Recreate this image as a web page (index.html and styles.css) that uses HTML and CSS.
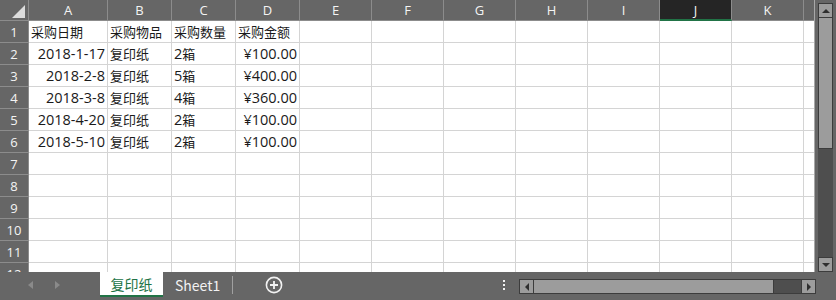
FILE: index.html
```html
<!DOCTYPE html>
<html>
<head>
<meta charset="utf-8">
<title>采购记录</title>
<link rel="stylesheet" href="styles.css">
</head>
<body>
<div class="book">
  <div class="sheet-area">
    <div class="grid">
      <!-- column headers -->
      <div class="corner"><span class="corner-mark"></span></div>
      <div class="col-head">A</div>
      <div class="col-head">B</div>
      <div class="col-head">C</div>
      <div class="col-head">D</div>
      <div class="col-head">E</div>
      <div class="col-head">F</div>
      <div class="col-head">G</div>
      <div class="col-head">H</div>
      <div class="col-head">I</div>
      <div class="col-head active">J</div>
      <div class="col-head">K</div>
      <div class="col-head edge"></div>

      <div class="row-head">1</div>
      <div class="cell">采购日期</div><div class="cell">采购物品</div><div class="cell">采购数量</div><div class="cell">采购金额</div>
      <div class="cell"></div><div class="cell"></div><div class="cell"></div><div class="cell"></div><div class="cell"></div><div class="cell"></div><div class="cell"></div><div class="cell edge"></div>

      <div class="row-head">2</div>
      <div class="cell num">2018-1-17</div><div class="cell">复印纸</div><div class="cell"><span class="digit">2</span>箱</div><div class="cell num">¥100.00</div>
      <div class="cell"></div><div class="cell"></div><div class="cell"></div><div class="cell"></div><div class="cell"></div><div class="cell"></div><div class="cell"></div><div class="cell edge"></div>

      <div class="row-head">3</div>
      <div class="cell num">2018-2-8</div><div class="cell">复印纸</div><div class="cell"><span class="digit">5</span>箱</div><div class="cell num">¥400.00</div>
      <div class="cell"></div><div class="cell"></div><div class="cell"></div><div class="cell"></div><div class="cell"></div><div class="cell"></div><div class="cell"></div><div class="cell edge"></div>

      <div class="row-head">4</div>
      <div class="cell num">2018-3-8</div><div class="cell">复印纸</div><div class="cell"><span class="digit">4</span>箱</div><div class="cell num">¥360.00</div>
      <div class="cell"></div><div class="cell"></div><div class="cell"></div><div class="cell"></div><div class="cell"></div><div class="cell"></div><div class="cell"></div><div class="cell edge"></div>

      <div class="row-head">5</div>
      <div class="cell num">2018-4-20</div><div class="cell">复印纸</div><div class="cell"><span class="digit">2</span>箱</div><div class="cell num">¥100.00</div>
      <div class="cell"></div><div class="cell"></div><div class="cell"></div><div class="cell"></div><div class="cell"></div><div class="cell"></div><div class="cell"></div><div class="cell edge"></div>

      <div class="row-head">6</div>
      <div class="cell num">2018-5-10</div><div class="cell">复印纸</div><div class="cell"><span class="digit">2</span>箱</div><div class="cell num">¥100.00</div>
      <div class="cell"></div><div class="cell"></div><div class="cell"></div><div class="cell"></div><div class="cell"></div><div class="cell"></div><div class="cell"></div><div class="cell edge"></div>

      <div class="row-head">7</div>
      <div class="cell"></div><div class="cell"></div><div class="cell"></div><div class="cell"></div>
      <div class="cell"></div><div class="cell"></div><div class="cell"></div><div class="cell"></div><div class="cell"></div><div class="cell"></div><div class="cell"></div><div class="cell edge"></div>

      <div class="row-head">8</div>
      <div class="cell"></div><div class="cell"></div><div class="cell"></div><div class="cell"></div>
      <div class="cell"></div><div class="cell"></div><div class="cell"></div><div class="cell"></div><div class="cell"></div><div class="cell"></div><div class="cell"></div><div class="cell edge"></div>

      <div class="row-head">9</div>
      <div class="cell"></div><div class="cell"></div><div class="cell"></div><div class="cell"></div>
      <div class="cell"></div><div class="cell"></div><div class="cell"></div><div class="cell"></div><div class="cell"></div><div class="cell"></div><div class="cell"></div><div class="cell edge"></div>

      <div class="row-head">10</div>
      <div class="cell"></div><div class="cell"></div><div class="cell"></div><div class="cell"></div>
      <div class="cell"></div><div class="cell"></div><div class="cell"></div><div class="cell"></div><div class="cell"></div><div class="cell"></div><div class="cell"></div><div class="cell edge"></div>

      <div class="row-head">11</div>
      <div class="cell"></div><div class="cell"></div><div class="cell"></div><div class="cell"></div>
      <div class="cell"></div><div class="cell"></div><div class="cell"></div><div class="cell"></div><div class="cell"></div><div class="cell"></div><div class="cell"></div><div class="cell edge"></div>

      <div class="row-head">12</div>
      <div class="cell"></div><div class="cell"></div><div class="cell"></div><div class="cell"></div>
      <div class="cell"></div><div class="cell"></div><div class="cell"></div><div class="cell"></div><div class="cell"></div><div class="cell"></div><div class="cell"></div><div class="cell edge"></div>
    </div>

    <div class="vscroll">
      <div class="sb-btn"><span class="tri up"></span></div>
      <div class="vthumb"></div>
      <div class="vtrack"></div>
      <div class="sb-btn"><span class="tri down"></span></div>
    </div>
  </div>

  <div class="tabbar">
    <div class="tab-nav">
      <span class="nav-tri left"></span>
      <span class="nav-tri right"></span>
    </div>
    <div class="tab current">复印纸</div>
    <div class="tab">Sheet1</div>
    <div class="tab-sep"></div>
    <div class="add-sheet">
      <svg width="18" height="18" viewBox="0 0 18 18">
        <circle cx="9" cy="9" r="7.6" fill="none" stroke="#f2f2f2" stroke-width="1.6"/>
        <path d="M9 5v8M5 9h8" stroke="#f2f2f2" stroke-width="1.8"/>
      </svg>
    </div>
    <div class="split-dots"><i></i><i></i><i></i></div>
    <div class="hscroll">
      <div class="sb-btn"><span class="tri left"></span></div>
      <div class="hthumb"></div>
      <div class="htrack"></div>
      <div class="sb-btn"><span class="tri right"></span></div>
    </div>
  </div>
</div>
</body>
</html>
```

FILE: styles.css
```css
body {
  margin: 0;
  background: #666666;
  font-family: "Noto Sans CJK SC", "Noto Sans", sans-serif;
}

.book {
  width: 836px;
  height: 300px;
  display: flex;
  flex-direction: column;
  overflow: hidden;
}

.sheet-area {
  height: 272px;
  display: flex;
  overflow: hidden;
}

/* the cells */
.grid {
  width: 815px;
  display: grid;
  grid-template-columns: 29px 79px 64px 64px 64px repeat(7, 72px) 11px;
  grid-template-rows: 21px repeat(12, 22px);
  background: #ffffff;
  border-right: 1px solid #a8a8a8;
  box-sizing: border-box;
  overflow: hidden;
  align-content: start;
}

.corner {
  background: #666666;
  border-right: 1px solid #8c8c8c;
  border-bottom: 1px solid #8c8c8c;
  position: relative;
}

.corner-mark {
  position: absolute;
  right: 3px;
  bottom: 2px;
  width: 0;
  height: 0;
  border-left: 13px solid transparent;
  border-bottom: 13px solid #dcdcdc;
}

.col-head {
  background: #666666;
  color: #f4f4f4;
  font-family: "Open Sans", "Noto Sans", sans-serif;
  font-size: 13px;
  display: flex;
  align-items: center;
  justify-content: center;
  border-right: 1px solid #8c8c8c;
  border-bottom: 1px solid #8c8c8c;
}

.col-head.active {
  background: #252525;
  border-bottom: 2px solid #217346;
}

.col-head.edge {
  border-right: none;
}

.row-head {
  background: #666666;
  color: #f4f4f4;
  font-family: "Open Sans", "Noto Sans", sans-serif;
  font-size: 13px;
  display: flex;
  align-items: center;
  justify-content: center;
  border-right: 1px solid #8c8c8c;
  border-bottom: 1px solid #8c8c8c;
}

.cell {
  border-right: 1px solid #d4d4d4;
  border-bottom: 1px solid #d4d4d4;
  font-size: 13px;
  color: #1a1a1a;
  padding: 0 2px 0 2px;
  display: flex;
  align-items: center;
  white-space: nowrap;
  overflow: visible;
}

/* numbers are set in a latin face, a bit larger like Excel's default */
.cell.num {
  justify-content: flex-end;
  font-family: "Open Sans", "Noto Sans CJK SC", sans-serif;
  font-size: 14.5px;
}

.digit {
  font-family: "Open Sans", sans-serif;
  font-size: 14.5px;
}

.cell.edge {
  border-right: none;
}

/* scroll bars */
.vscroll {
  width: 21px;
  padding: 3px 3px 0 3px;
  box-sizing: border-box;
  display: flex;
  flex-direction: column;
}

.sb-btn {
  width: 15px;
  height: 15px;
  background: #9c9c9c;
  border: 1px solid #3c3c3c;
  box-sizing: border-box;
  display: flex;
  align-items: center;
  justify-content: center;
  flex-shrink: 0;
}

.vthumb {
  height: 131px;
  background: #9c9c9c;
  border: 1px solid #3c3c3c;
  border-top: none;
  box-sizing: border-box;
}

.vtrack {
  flex: 1;
  background: #4e4e4e;
}

.tri {
  width: 0;
  height: 0;
}

.tri.up {
  border-left: 4px solid transparent;
  border-right: 4px solid transparent;
  border-bottom: 4px solid #2e2e2e;
}

.tri.down {
  border-left: 4px solid transparent;
  border-right: 4px solid transparent;
  border-top: 4px solid #2e2e2e;
}

.tri.left {
  border-top: 4px solid transparent;
  border-bottom: 4px solid transparent;
  border-right: 4px solid #2e2e2e;
}

.tri.right {
  border-top: 4px solid transparent;
  border-bottom: 4px solid transparent;
  border-left: 4px solid #2e2e2e;
}

/* sheet tabs */
.tabbar {
  height: 28px;
  display: flex;
  align-items: flex-start;
  background: #666666;
}

.tab-nav {
  width: 100px;
  height: 25px;
  display: flex;
  align-items: center;
  gap: 22px;
  padding-left: 28px;
  box-sizing: border-box;
}

.nav-tri {
  width: 0;
  height: 0;
  border-top: 4px solid transparent;
  border-bottom: 4px solid transparent;
}

.nav-tri.left {
  border-right: 5px solid #8a8a8a;
}

.nav-tri.right {
  border-left: 5px solid #8a8a8a;
}

.tab {
  height: 25px;
  padding: 0 12px;
  display: flex;
  align-items: center;
  color: #f2f2f2;
  font-size: 14px;
  white-space: nowrap;
  box-sizing: border-box;
}

.tab.current {
  width: 63px;
  padding: 0;
  justify-content: center;
  background: #ffffff;
  color: #217346;
  border-bottom: 2px solid #217346;
}

.tab-sep {
  width: 1px;
  height: 18px;
  margin-top: 4px;
  background: #a0a0a0;
}

.add-sheet {
  height: 26px;
  display: flex;
  align-items: center;
  margin-left: 32px;
}

.split-dots {
  margin-left: 220px;
  height: 28px;
  display: flex;
  flex-direction: column;
  justify-content: center;
  gap: 2px;
  padding-bottom: 2px;
  box-sizing: border-box;
}

.split-dots i {
  display: block;
  width: 2px;
  height: 2px;
  background: #f2f2f2;
}

.hscroll {
  margin-left: 14px;
  margin-top: 7px;
  width: 297px;
  height: 15px;
  display: flex;
}

.hthumb {
  width: 240px;
  background: #9c9c9c;
  border: 1px solid #3c3c3c;
  border-left: none;
  box-sizing: border-box;
}

.htrack {
  flex: 1;
  background: #4e4e4e;
  border-top: 1px solid #3c3c3c;
  border-bottom: 1px solid #3c3c3c;
}
```
